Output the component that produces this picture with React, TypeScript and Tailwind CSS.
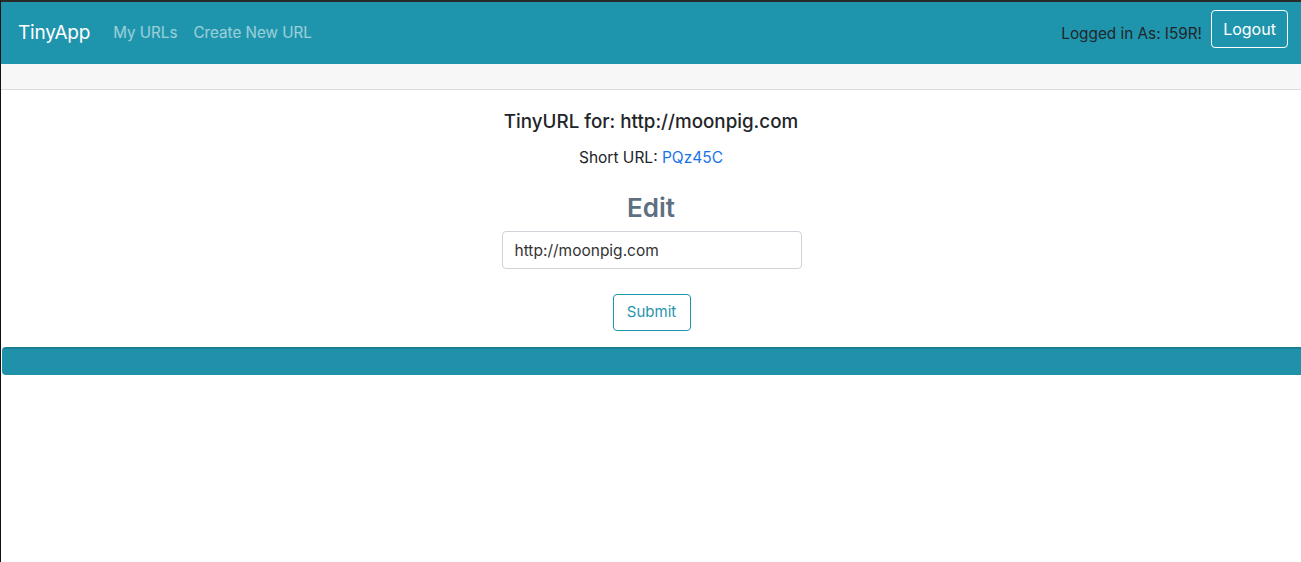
export default function App() {
  return (
    <div
      className="min-h-[562px] w-full border-l border-l-[#111] border-t-2 border-t-[#2a2a2a] bg-white text-[#212529]"
      style={{ fontFamily: 'Inter, "Liberation Sans", sans-serif' }}
    >
      <nav className="h-[62px] bg-[#1f95ad] flex items-center justify-between pl-[17px] pr-[13px]">
        <div className="flex items-center">
          <span className="text-white text-[19px] mr-[23px] tracking-[-0.2px]">TinyApp</span>
          <span className="text-white/55 text-[15.2px] mr-[16px]">My URLs</span>
          <span className="text-white/55 text-[15.2px]">Create New URL</span>
        </div>
        <div className="flex items-center">
          <span className="text-[#212529] text-[15.3px] mr-[9px] mt-[2px]">Logged in As: I59R!</span>
          <button className="h-[38px] w-[77px] border border-white rounded-[4px] text-white text-[16px] -mt-[8px]">
            Logout
          </button>
        </div>
      </nav>
      <div className="h-[26px] bg-[#f7f7f7] border-b border-[#dcdcdc]"></div>
      <main className="flex flex-col items-center">
        <h3 className="text-[18.8px] font-medium mt-[20px] leading-[24px]">TinyURL for: http://moonpig.com</h3>
        <p className="text-[15.5px] mt-[13px] leading-[22px]">
          Short URL: <span className="text-[#1a73e8]">PQz45C</span>
        </p>
        <h2 className="text-[26px] font-semibold text-[#5f6f82] mt-[23px] leading-[32px]">Edit</h2>
        <input
          readOnly
          value="http://moonpig.com"
          className="mt-[7px] ml-[1px] w-[300px] h-[38px] border border-[#ced4da] rounded-[4px] px-[12px] text-[15.5px] text-[#333] outline-none"
        />
        <button className="mt-[25px] ml-[1px] h-[37px] w-[78px] border border-[#1f95ad] rounded-[4px] text-[#1f95ad] text-[15px]">
          Submit
        </button>
      </main>
      <div className="mt-[16px] ml-[1px] h-[28px] bg-[#1f92aa] border-t-2 border-t-[#1b7f93] rounded-l-[4px]"></div>
    </div>
  );
}
